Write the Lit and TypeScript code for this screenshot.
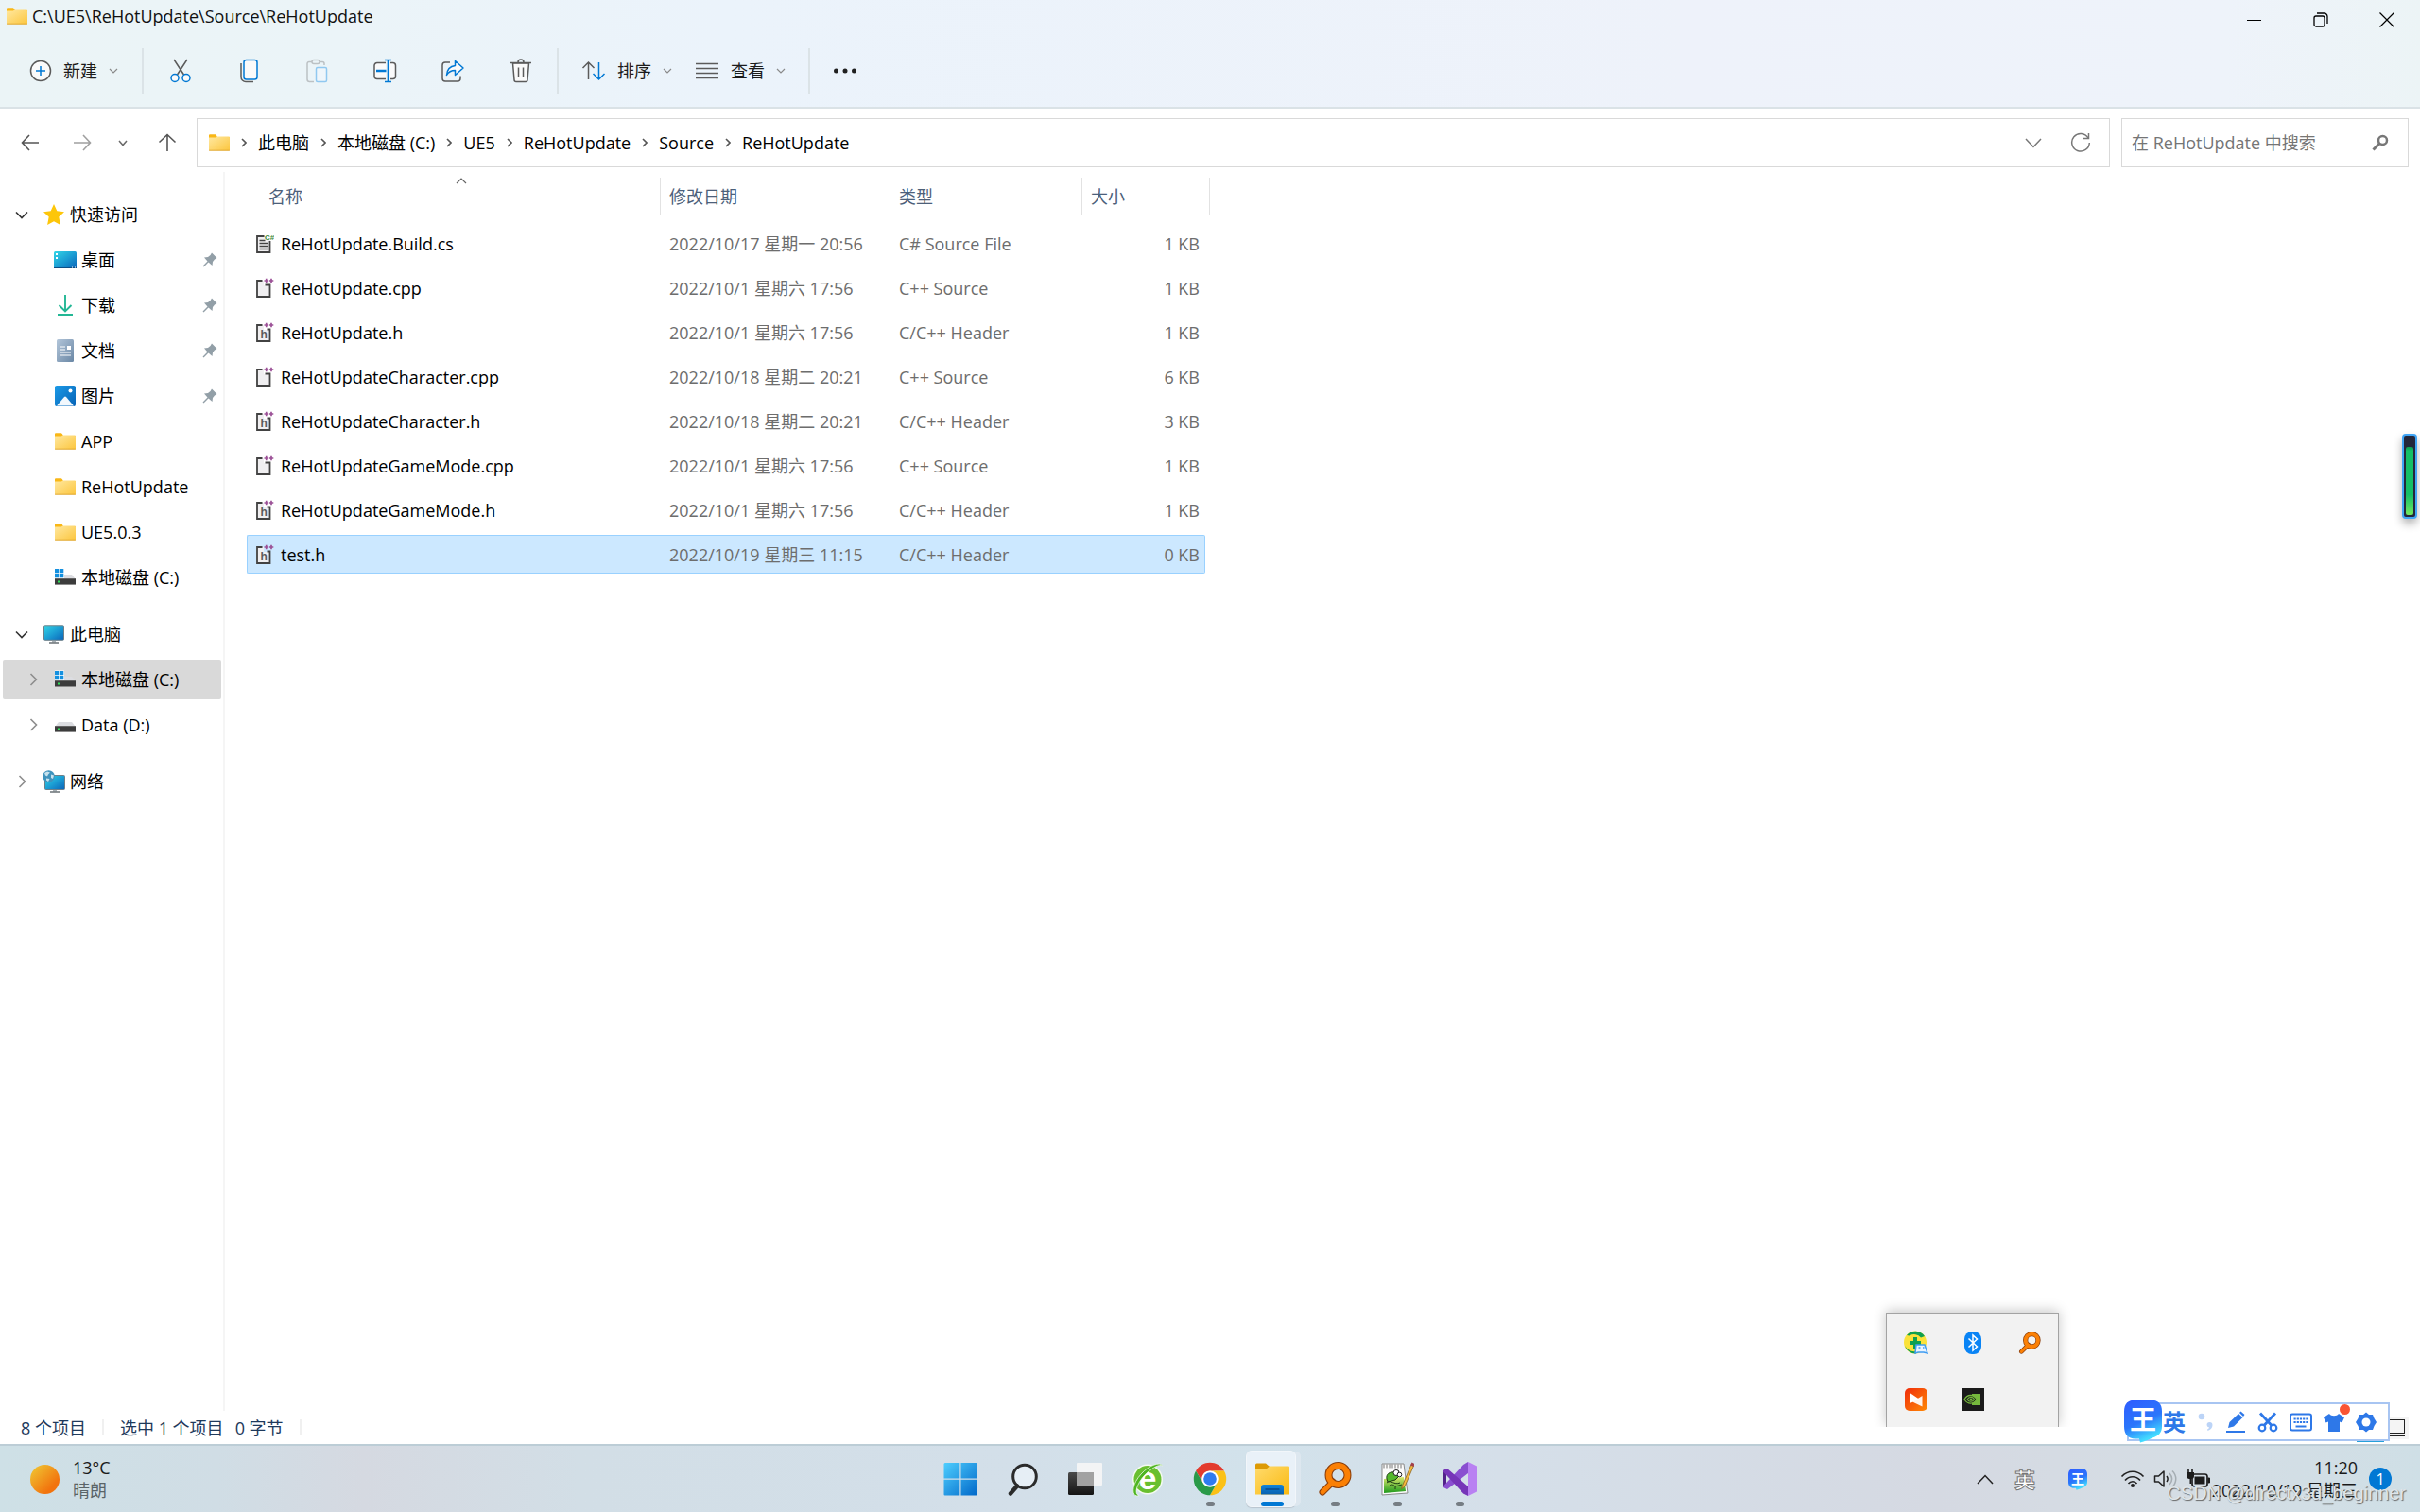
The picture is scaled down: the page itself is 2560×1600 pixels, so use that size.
import { LitElement, html, css, svg, nothing } from "lit";
import { customElement, property } from "lit/decorators.js";
import { classMap } from "lit/directives/class-map.js";

const icon = (w: number, h: number, body: unknown, vb = `0 0 ${w} ${h}`) =>
  html`<svg width=${w} height=${h} viewBox=${vb} fill="none" aria-hidden="true">${body}</svg>`;

/* ---------- toolbar ---------- */
const GREY = "#5b5b5b";
const BLUE = "#0078d4";

const newIcon = icon(24, 24, svg`
  <circle cx="12" cy="12" r="10.5" fill="#fafafa" stroke=${GREY} stroke-width="1.5"/>
  <path d="M12 7v10M7 12h10" stroke=${BLUE} stroke-width="1.5"/>`);
const cutIcon = icon(26, 26, svg`
  <path d="M6 1l10.500 16M20 1L9.500 17" stroke=${GREY} stroke-width="1.500"/>
  <circle cx="7" cy="20.500" r="4" fill="#fafafa" stroke=${BLUE} stroke-width="1.500"/>
  <circle cx="19" cy="20.500" r="4" fill="#fafafa" stroke=${BLUE} stroke-width="1.500"/>`);
const copyIcon = icon(26, 26, svg`
  <path d="M5 5v14.500a5 5 0 0 0 5 5h8" stroke=${GREY} stroke-width="1.500"/>
  <rect x="8" y="1.500" width="14" height="20.500" rx="2.500" fill="#fafafa" stroke=${BLUE} stroke-width="1.500"/>`);
const pasteIcon = icon(26, 26, svg`
  <path d="M8 3.500H5a2 2 0 0 0-2 2V22a2.500 2.500 0 0 0 2.500 2.500H10M16 3.500h3a2 2 0 0 1 2 2V7" stroke="#bcc1c4" stroke-width="1.500"/>
  <rect x="8" y="1.500" width="8" height="4" rx="2" stroke="#bcc1c4" stroke-width="1.500"/>
  <rect x="12.500" y="9.500" width="11" height="15" rx="1.500" fill="#eff6fb" stroke="#90c8f0" stroke-width="1.500"/>`);
const renameIcon = icon(26, 26, svg`
  <path d="M14 4.500H5a3 3 0 0 0-3 3v11a3 3 0 0 0 3 3h9zM19 4.500h2.500a3 3 0 0 1 3 3v11a3 3 0 0 1-3 3H19z" fill="#fafafa"/>
  <path d="M14 4.500H5a3 3 0 0 0-3 3v11a3 3 0 0 0 3 3h9M19 4.500h2.500a3 3 0 0 1 3 3v11a3 3 0 0 1-3 3H19" stroke=${GREY} stroke-width="1.500"/>
  <path d="M13 1.500h7M13 24.500h7M16.500 1.500v23" stroke=${BLUE} stroke-width="1.700"/>
  <path d="M4 13h10.500" stroke=${BLUE} stroke-width="2.500"/>`);
const shareIcon = icon(26, 26, svg`
  <path d="M10 4H5a3 3 0 0 0-3 3v14a3 3 0 0 0 3 3h13a3 3 0 0 0 3-3v-2.500" stroke=${GREY} stroke-width="1.500"/>
  <path d="M6.500 17.500C7 11 11 8 15.500 7.500V2.500l8.500 7.500-8.500 7.500v-5c-4 0-7 1.500-9 5z" fill="#fafafa" stroke=${BLUE} stroke-width="1.500" stroke-linejoin="round"/>`);
const trashIcon = icon(26, 26, svg`
  <path d="M4.500 5l1.500 17.500a2 2 0 0 0 2 2h10a2 2 0 0 0 2-2L21.500 5z" fill="#fafafa" stroke=${GREY} stroke-width="1.500"/>
  <path d="M2 4.500h22M10 4a3 3 0 0 1 6 0M10.500 9.500v9.500M15.500 9.500v9.500" stroke=${GREY} stroke-width="1.500"/>`);
const sortIcon = icon(26, 22, svg`
  <path d="M7.500 20V2M1.500 8l6-6 6 6" stroke=${GREY} stroke-width="1.500"/>
  <path d="M18.500 2v18M12.500 14l6 6 6-6" stroke=${BLUE} stroke-width="1.500"/>`);
const viewIcon = icon(26, 18, svg`<path d="M1 1.500h24M1 6.500h24M1 11.500h24M1 16.500h24" stroke=${GREY} stroke-width="1.500"/>`);
const dotsIcon = icon(26, 6, svg`<g fill="#202020"><circle cx="3.500" cy="3" r="2.500"/><circle cx="13" cy="3" r="2.500"/><circle cx="22.500" cy="3" r="2.500"/></g>`);
const smallChevron = icon(10, 6, svg`<path d="M1 1l4 4 4-4" stroke="#8a8a8a" stroke-width="1.200"/>`);

/* ---------- window controls and navigation ---------- */
const minIcon = icon(16, 16, svg`<path d="M0 8.500h15" stroke="#000"/>`);
const restoreIcon = icon(16, 16, svg`
  <rect x="1" y="4" width="11" height="11" rx="2" stroke="#000" stroke-width="1.300"/>
  <path d="M4 1h7.500a3.500 3.500 0 0 1 3.500 3.500V12" stroke="#000" stroke-width="1.300"/>`);
const closeIcon = icon(16, 16, svg`<path d="M.500.500l15 15M15.500.500l-15 15" stroke="#000" stroke-width="1.200"/>`);
const backIcon = icon(20, 18, svg`<path d="M19 9H2M9 1L1.500 9 9 17" stroke="#555" stroke-width="1.600"/>`);
const fwdIcon = icon(20, 18, svg`<path d="M1 9h17M11 1l7.500 8-7.500 8" stroke="#a0a0a0" stroke-width="1.600"/>`);
const recentIcon = icon(10, 7, svg`<path d="M1 1l4 4.500L9 1" stroke="#6a6a6a" stroke-width="1.500"/>`);
const upIcon = icon(20, 20, svg`<path d="M10 19V2M1.500 9.500L10 1.500l8.500 8" stroke="#555" stroke-width="1.600"/>`);
const crumbIcon = icon(6, 10, svg`<path d="M1 1l4 4-4 4" stroke="#555" stroke-width="1.600"/>`);
const bigDown = icon(18, 11, svg`<path d="M1 1l8 8.500L17 1" stroke="#777" stroke-width="1.500"/>`);
const refreshIcon = icon(22, 22, svg`
  <path d="M19 6A9.300 9.300 0 1 0 20.300 11" stroke="#777" stroke-width="1.500"/>
  <path d="M19.500 1v5.500H14" stroke="#777" stroke-width="1.500"/>`);
const findIcon = icon(18, 18, svg`
  <circle cx="11.500" cy="6.500" r="4.500" stroke="#777" stroke-width="2.500"/>
  <path d="M8 10l-6.500 6.500" stroke="#777" stroke-width="3"/>`);
const sortCaret = icon(12, 7, svg`<path d="M1 6l5-5 5 5" stroke="#666" stroke-width="1.200"/>`);

/* ---------- sidebar ---------- */
const openChevron = icon(14, 9, svg`<path d="M1 1.500l6 6 6-6" stroke="#333" stroke-width="1.600"/>`);
const closedChevron = icon(9, 14, svg`<path d="M1.500 1l6 6-6 6" stroke="#8e8e8e" stroke-width="1.600"/>`);
const pinIcon = icon(16, 16, svg`
  <path d="M10 .500L15.500 6l-2.500 1.500-2 2.500-.500 4L6.500 10.500 1.500 15.500.500 14.500l5-5L2 5.500l4-.500L8.500 3z" fill="#929fa7"/>`);
const folderIcon = icon(22, 18, svg`
  <defs><linearGradient id="fo" x1="0" y1="0" x2="1" y2="1"><stop stop-color="#ffe8a0"/><stop offset="1" stop-color="#fcc63e"/></linearGradient></defs>
  <path d="M0 1.500A1 1 0 0 1 1 .500h6L9 3H22v5H0z" fill="#f5b31c"/>
  <rect y="2.500" width="22" height="15" rx="1" fill="url(#fo)"/>
  <path d="M0 2.500V1.500A1 1 0 0 1 1 .500h6L8.500 2 7 3.500H0z" fill="#f9b716"/>
  <path d="M0 17.200h22" stroke="#d9a02a" stroke-width=".8"/>`);
const starIcon = icon(22, 22, svg`
  <path d="M11 0l3.300 7.300 7.700.9-5.700 5.300 1.600 8.500L11 18.200 4.100 22l1.600-8.500L0 8.200l7.700-.9z" fill="#fdc60a"/>`);
const blueGrad = (id: string) => svg`<defs><linearGradient id=${id} x1="0" y1="0" x2="1" y2="1"><stop stop-color="#33d6e6"/><stop offset=".5" stop-color="#1c9fd4"/><stop offset="1" stop-color="#0a63b8"/></linearGradient></defs>`;
const desktopIcon = icon(24, 18, svg`${blueGrad("dk")}
  <rect width="24" height="18" rx="1.500" fill="url(#dk)"/>
  <path d="M2 2h2v2H2zM2 6h2v2H2z" fill="#fff"/><path d="M0 17.500h24" stroke="#0c4f86"/><path d="M19 17h1M22 17h1" stroke="#fff"/>`);
const downloadIcon = icon(22, 24, svg`
  <path d="M11 1v17M4.500 12l6.500 6.500 6.500-6.500M3 22h16" stroke="#23b795" stroke-width="1.900"/>`);
const docIcon = icon(22, 24, svg`
  <defs><linearGradient id="dc" x1="0" y1="0" x2="1" y2="1"><stop stop-color="#b3c6da"/><stop offset="1" stop-color="#6a87a5"/></linearGradient></defs>
  <rect x="2" width="18" height="24" rx="1.500" fill="url(#dc)"/>
  <path d="M5 8h6M5 11h6M5 14h12M5 17h12" stroke="#fff"/><path d="M13 7h4v4h-4z" fill="#fff"/>`);
const pictureIcon = icon(22, 22, svg`
  <defs><linearGradient id="pc" x1="0" y1="0" x2="1" y2="1"><stop stop-color="#1c9be8"/><stop offset="1" stop-color="#0662b5"/></linearGradient></defs>
  <rect width="22" height="22" rx="2" fill="url(#pc)"/>
  <path d="M2 21.500l8-9.500a1.500 1.500 0 0 1 2 0l8 9.500z" fill="#f2f8fd"/><circle cx="16.500" cy="5.500" r="2" fill="#fff"/>`);
const driveBody = svg`
  <path d="M4 8h14l4 5H0z" fill="#dcdde1"/>
  <rect y="12" width="22" height="7" fill="#8c8c8c"/><rect y="12.500" width="22" height="5.500" fill="#3c3c3c"/>
  <rect x="3" y="14.500" width="2" height="2" fill="#2fe05a"/>`;
const driveIcon = icon(22, 22, driveBody);
const sysDriveIcon = icon(22, 22, svg`${driveBody}
  <rect width="10" height="10.500" y="1.500" fill="#fff"/>
  <path d="M0 2h4.300v4.300H0zM5 2h4.300v4.300H5zM0 7h4.300v4.300H0zM5 7h4.300v4.300H5z" fill="#1490df"/>`);
const pcIcon = icon(22, 20, svg`${blueGrad("pcg")}
  <rect x=".5" y=".8" width="21" height="15.500" rx="1" fill="url(#pcg)" stroke="#6e7f88"/>
  <path d="M9 17h4v1.500H9z" fill="#a9b1b6"/><path d="M6 19h10" stroke="#5d666b" stroke-width="1.400"/>`);
const netIcon = icon(24, 24, svg`${blueGrad("ng")}
  <rect x="2.500" y="5.500" width="21" height="15" rx="1" fill="url(#ng)" stroke="#6e7f88"/>
  <path d="M11 21h4v1.500h-4z" fill="#a9b1b6"/><path d="M8 23h10" stroke="#5d666b" stroke-width="1.400"/>
  <circle cx="6.500" cy="6.500" r="6.300" fill="#3f93bd"/><path d="M2 3l3-1.500 3 1-2 2-1 2-2-1zM9 4.500l3 1-1 3.500-2-1zM4 8.500l3.500.500L6 12 4 10.500z" fill="#c6e2ee"/>`);

/* ---------- file types ---------- */
const csIcon = icon(20, 22, svg`
  <path d="M1 3h10v4h5v13H1z" fill="#f0eff1"/>
  <path d="M9.500 3H2v17h13.500V8" stroke="#424242" stroke-width="1.800"/>
  <path d="M4.500 7.500h6M4.500 10.500h8.500M4.500 13.500h8.500M4.500 16.500h8.500" stroke="#424242" stroke-width="1.600"/>
  <text x="10" y="7" font-size="8" font-weight="700" font-family="Liberation Sans, sans-serif" fill="#388a34">C#</text>`);
const plus = svg`<path d="M9.500 3h4.500M11.700.800v4.500M14.800 3h4.500M17 .800v4.500" stroke="#9b4f96" stroke-width="1.700"/>`;
const cppIcon = icon(20, 22, svg`
  <path d="M1 3h8v5h6.500v12H1z" fill="#f0eff1"/>
  <path d="M7.500 3H2v17h13.500V7.500h-5" stroke="#424242" stroke-width="1.800"/>${plus}`);
const hIcon = icon(20, 22, svg`
  <path d="M1 3h8v5h6.500v12H1z" fill="#f0eff1"/>
  <path d="M7.500 3H2v17h13.500V7.500h-3" stroke="#424242" stroke-width="1.800"/>
  <text x="5.500" y="17" font-size="12" font-weight="700" font-family="Liberation Sans, sans-serif" fill="#5b5b5b">h</text>${plus}`);

/* ---------- taskbar ---------- */
const startIcon = icon(36, 36, svg`
  <defs><linearGradient id="st" gradientUnits="userSpaceOnUse" x1="0" y1="0" x2="36" y2="36"><stop stop-color="#4fd0ff"/><stop offset="1" stop-color="#0067c9"/></linearGradient></defs>
  <path d="M1.500 1H17.300v16.500H.500V2zM18.500 1h16a1 1 0 0 1 1 1v15.500h-17zM.500 18.700h16.800V35.500H1.500a1 1 0 0 1-1-1zM18.500 18.700h17v15.800a1 1 0 0 1-1 1h-16z" fill="url(#st)"/>`);
const searchIcon = icon(36, 36, svg`
  <circle cx="20" cy="15.500" r="12.300" fill="#e6eef5" stroke="#2b2b2b" stroke-width="3"/>
  <path d="M12 25.500l-7 8" stroke="#2b2b2b" stroke-width="4.500" stroke-linecap="round"/>`);
const taskViewIcon = icon(38, 36, svg`
  <defs><linearGradient id="tv" x1="0" y1="0" x2="0" y2="1"><stop stop-color="#4a4a4a"/><stop offset="1" stop-color="#141414"/></linearGradient></defs>
  <rect x="1" y="11" width="27" height="24" rx="1.500" fill="url(#tv)"/>
  <rect x="10" y="1" width="27" height="24" rx="1" fill="#f6f6f6" opacity=".9"/>
  <path d="M10 11h18v14H10z" fill="#a2a2a2"/>`);
const ieIcon = icon(36, 38, svg`
  <circle cx="18" cy="19.500" r="16" fill="#f4faf0"/>
  <circle cx="18" cy="19.500" r="14.500" fill="#69bf2f"/>
  <text x="18" y="29.500" text-anchor="middle" font-size="34" font-weight="700" font-family="Liberation Sans, sans-serif" fill="#fff">e</text>
  <path d="M33.500 5C32 1 21 3 11 14 2 24 1 34 5 36.500c2 1 4 0 4 0C3 35 7 24 14 16 22 7 31 3 33.500 5z" fill="#4fb521" stroke="#eef8ea" stroke-width=".8"/>`);
const chromeIcon = icon(36, 36, svg`
  <path d="M4.950 13A22 22 0 0 1 43.050 13H24A11 11 0 0 0 14.500 29.500z" fill="#e33b2e"/>
  <path d="M43.050 13A22 22 0 0 1 24 46L33.500 29.500A11 11 0 0 0 24 13z" fill="#fbc116"/>
  <path d="M24 46A22 22 0 0 1 4.950 13L14.500 29.500A11 11 0 0 0 33.500 29.500z" fill="#2a9a48"/>
  <circle cx="24" cy="24" r="11" fill="#fff"/><circle cx="24" cy="24" r="8.700" fill="#2f7bf0"/>`, "1 1 46 46");
const explorerIcon = icon(38, 36, svg`
  <defs>
    <linearGradient id="ex" x1="0" y1="0" x2="1" y2="1"><stop stop-color="#ffdb6e"/><stop offset="1" stop-color="#fab90f"/></linearGradient>
    <linearGradient id="eb" x1="0" y1="0" x2="0" y2="1"><stop stop-color="#1185da"/><stop offset="1" stop-color="#0861b0"/></linearGradient>
  </defs>
  <path d="M1 3a1.500 1.500 0 0 1 1.500-1.500h9.500L16 5H1z" fill="#dd9a05"/><path d="M1 3.500h12L16 5v4H1z" fill="#dd9a05"/>
  <path d="M1 8h11l4-3.500h20a1 1 0 0 1 1 1V34.500H1z" fill="url(#ex)"/>
  <path d="M7 34.500V27a3 3 0 0 1 3-3h18a3 3 0 0 1 3 3v7.500z" fill="url(#eb)"/>
  <path d="M11.500 29h15" stroke="#084c8d" stroke-width="1.600"/>`);
const key = (s: number) => icon(s, s, svg`
  <path d="M16 21L5 32" stroke="#8c3f0c" stroke-width="7" stroke-linecap="round"/>
  <circle cx="21.500" cy="14" r="10" stroke="#8c3f0c" stroke-width="8"/>
  <circle cx="21.500" cy="14" r="10" stroke="#fb8005" stroke-width="5.800"/>
  <path d="M15.500 21.500L5 32" stroke="#fb8005" stroke-width="4.800" stroke-linecap="round"/>`, "0 0 36 36");
const notepadIcon = icon(36, 38, svg`
  <defs><linearGradient id="np" x1="0" y1="0" x2="0" y2="1"><stop stop-color="#d7e86b"/><stop offset="1" stop-color="#1f9a1d"/></linearGradient></defs>
  <path d="M2 3h23l4 31-27 2z" fill="#fbfbfb" stroke="#8b8b8b"/>
  <path d="M4 19l21-2 2 15-23 2z" fill="url(#np)"/>
  <path d="M4 3.500v4M7 3.500v4M10 3.500v4M13 3.500v4M16 3.500v4M19 3.500v4M22 3.500v4" stroke="#777"/>
  <path d="M7 19c-1-5 3-8 9-7l3-2 1 6-4 4-8 2z" fill="#54b82c" stroke="#1f3d16"/>
  <circle cx="17" cy="12.500" r="3" fill="#fff" stroke="#222"/><circle cx="20.500" cy="14.500" r="2.300" fill="#fff" stroke="#222"/>
  <path d="M7 23c4-4 8 3 14 0M10 26c2-2 5 0 5 0M16 30v-3l7-2" stroke="#1f3d16"/>
  <path d="M33 3.500L24 25l-1.500 4.500L26 27 35.500 5z" fill="#f5b83d" stroke="#8c6420" stroke-width=".8"/>
  <path d="M32 4.500l1.500-3 3 1.500-1 3z" fill="#a2404b"/>`);
const vsIcon = icon(36, 36, svg`
  <path d="M0 9.500l4-2v20l-4-1.500z" fill="#52218a"/>
  <path d="M27 0v12L5 29l-5-2.500L22 3z" fill="#8a4fd0"/>
  <path d="M0 9.500l5-2.500 22 19v10l-5-2.500z" fill="#7635b8"/>
  <path d="M27 0l9 4.500v27L27 36z" fill="#b981f2"/>`);

/* ---------- tray ---------- */
const trayUp = icon(18, 11, svg`<path d="M1 10l8-8.500 8 8.500" stroke="#222" stroke-width="1.500"/>`);
const wangLogo = (w: number, h: number) => icon(w, h, svg`
  <defs><linearGradient id="wg" x1="0" y1="0" x2=".4" y2="1"><stop stop-color="#2f5cff"/><stop offset=".6" stop-color="#2a76fb"/><stop offset="1" stop-color="#43dcff"/></linearGradient></defs>
  <path d="M12 0h16C36 0 40 4 40 12v16c0 7-4 10-10 12-4 2-9 4-13 5l-1-4h-4C4 41 0 36 0 28V12C0 4 4 0 12 0z" fill="url(#wg)"/>
  <text x="20" y="31" text-anchor="middle" font-size="28" font-weight="700" font-family="'Noto Sans CJK SC', sans-serif" fill="#fff">王</text>`, "0 0 40 45");
const wifiIcon = icon(26, 20, svg`
  <path d="M1.500 7.500c6.500-7 16.500-7 23 0M5 11.500c4.500-5 11.500-5 16 0M8.500 15c2.500-3 6.500-3 9 0" stroke="#222" stroke-width="1.700"/>
  <circle cx="13" cy="17" r="2" fill="#222"/>`);
const volIcon = icon(26, 20, svg`
  <path d="M1.500 7v6h4l5.500 5V2L5.500 7z" stroke="#222" stroke-width="1.500" stroke-linejoin="round"/>
  <path d="M14 7c1.500 2 1.500 4 0 6" stroke="#222" stroke-width="1.500"/>
  <path d="M17 4c3.500 4 3.500 8 0 12M20 1.500c5 5 5 12 0 17" stroke="#a5adb2" stroke-width="1.500"/>`);
const batIcon = icon(26, 22, svg`
  <rect x="6" y="6" width="16" height="13" rx="2.500" stroke="#1c1c1c" stroke-width="1.700"/>
  <rect x="8.500" y="8.500" width="11" height="8" fill="#1c1c1c"/><path d="M23 10h1.500v5H23z" fill="#1c1c1c" stroke="#1c1c1c"/>
  <path d="M0 4h8v4a3 3 0 0 1-3 3v5H3.500v-5A3 3 0 0 1 0 8z" fill="#1c1c1c"/><path d="M2 1v4M6 1v4" stroke="#1c1c1c" stroke-width="1.600"/>`);

const guardIcon = icon(26, 26, svg`
  <circle cx="12" cy="12.500" r="12" fill="#fbe23a"/>
  <path d="M3 5A12 12 0 0 1 22 6L18 7.500A9 9 0 0 0 6 5.500zM1 16a12 12 0 0 0 12 8.500V22A12 12 0 0 1 1 16z" fill="#0fa050"/>
  <path d="M10 7h4v4h4v4h-4v4h-4v-4H6v-4h4z" fill="#0fa050"/>
  <path d="M13 15h9l3 9-4-1h-6l-3 1z" fill="#eaf4ff" stroke="#3f9cf2" stroke-width="1.500"/><path d="M15.500 18h2M20 18h1.500" stroke="#3f9cf2" stroke-width="1.500"/>`);
const btIcon = icon(20, 26, svg`
  <rect x="1" y="1" width="18" height="24" rx="8" fill="#0a84f5"/>
  <path d="M5.500 8.500l9 8.500-4.500 4V5l4.500 4-9 8.500" stroke="#fff" stroke-width="1.500"/>`);
const redIcon = icon(24, 26, svg`
  <defs><linearGradient id="rd" x1="0" y1="0" x2="1" y2="1"><stop stop-color="#f02c0a"/><stop offset="1" stop-color="#ff8a05"/></linearGradient></defs>
  <rect y="1" width="24" height="24" rx="5" fill="url(#rd)"/>
  <path d="M5.500 6L15 12.500 5.500 17z" fill="#fff"/><path d="M18.500 9v11.500L8 15.500z" fill="#fff" opacity=".92"/>`);
const nvIcon = icon(24, 24, svg`
  <rect width="24" height="24" fill="#1b1b1b"/><path d="M11 6h9v12h-9z" fill="#76b93d"/>
  <path d="M3 12c3-6 10-6 13 0-3 5-9 6-13 0z" fill="#1b1b1b" stroke="#76b93d" stroke-width="1.300"/>
  <path d="M6 12c2-3.500 6-3.500 7.500 0-2 3-5.500 3-7.500 0z" stroke="#76b93d" stroke-width="1.200"/><circle cx="10" cy="12" r="1.500" fill="#76b93d"/>`);

/* ---------- input-method bar ---------- */
const IME = "#2e78e8";
const penIcon = icon(22, 24, svg`<path d="M3 18l1.500-6L14 3l4.500 4-9.500 9.500z" fill=${IME}/><path d="M15 2l1.500-1.500 4 3.500L19 6z" fill=${IME}/><path d="M1 22h20" stroke=${IME} stroke-width="2"/>`);
const snipIcon = icon(22, 22, svg`<path d="M3 1.500l12 13M19 1.500L7 14.500" stroke=${IME} stroke-width="2.800"/><circle cx="5" cy="17" r="3.300" stroke=${IME} stroke-width="2.200"/><circle cx="17" cy="17" r="3.300" stroke=${IME} stroke-width="2.200"/>`);
const kbIcon = icon(24, 20, svg`<rect x="1" y="1.500" width="22" height="17" rx="2" stroke=${IME} stroke-width="2"/><path d="M4.500 6.500h15M4.500 10h15" stroke=${IME} stroke-width="2" stroke-dasharray="2.200 1"/><path d="M6.500 14.500h11" stroke=${IME} stroke-width="2"/>`);
const shirtIcon = icon(22, 22, svg`<path d="M6 2c2 3 8 3 10 0l6 4-2.500 5.500L17 10.500V21H5V10.500l-2.500 1L0 6z" fill=${IME}/>`);
const gearIcon = icon(22, 22, svg`<path d="M8 3l3-2.500L14 3l4 0 1.500 4L22 11l-2.500 4L18 19h-4l-3 2.500L8 19H4L2.500 15 0 11l2.500-4L4 3z" fill=${IME}/><circle cx="11" cy="11" r="4.500" fill="#fff"/>`);
const commaIcon = icon(18, 22, svg`<circle cx="5" cy="5" r="3.300" fill="#bcd4f7"/><path d="M10.500 14a3 3 0 1 1 6 0c0 3-2 5-5 6l-.500-1.500c1.500-.500 2-1.500 2-2a3 3 0 0 1-2.500-2.500z" fill="#bcd4f7"/>`);
const largeViewIcon = icon(22, 22, svg`<rect x="2.500" y="2.500" width="17" height="14" stroke="#222"/><path d="M2 19.500h18" stroke="#222"/>`);

type Place = { label: string; icon: unknown; level: 0 | 1; open?: boolean; branch?: boolean; pinned?: boolean; current?: boolean };
const places: Place[][] = [
  [
    { label: "快速访问", icon: starIcon, level: 0, branch: true, open: true },
    { label: "桌面", icon: desktopIcon, level: 1, pinned: true },
    { label: "下载", icon: downloadIcon, level: 1, pinned: true },
    { label: "文档", icon: docIcon, level: 1, pinned: true },
    { label: "图片", icon: pictureIcon, level: 1, pinned: true },
    { label: "APP", icon: folderIcon, level: 1 },
    { label: "ReHotUpdate", icon: folderIcon, level: 1 },
    { label: "UE5.0.3", icon: folderIcon, level: 1 },
    { label: "本地磁盘 (C:)", icon: sysDriveIcon, level: 1 },
  ],
  [
    { label: "此电脑", icon: pcIcon, level: 0, branch: true, open: true },
    { label: "本地磁盘 (C:)", icon: sysDriveIcon, level: 1, branch: true, current: true },
    { label: "Data (D:)", icon: driveIcon, level: 1, branch: true },
  ],
  [{ label: "网络", icon: netIcon, level: 0, branch: true }],
];

const files = [
  ["cs", "ReHotUpdate.Build.cs", "2022/10/17 星期一 20:56", "C# Source File", "1 KB"],
  ["cpp", "ReHotUpdate.cpp", "2022/10/1 星期六 17:56", "C++ Source", "1 KB"],
  ["h", "ReHotUpdate.h", "2022/10/1 星期六 17:56", "C/C++ Header", "1 KB"],
  ["cpp", "ReHotUpdateCharacter.cpp", "2022/10/18 星期二 20:21", "C++ Source", "6 KB"],
  ["h", "ReHotUpdateCharacter.h", "2022/10/18 星期二 20:21", "C/C++ Header", "3 KB"],
  ["cpp", "ReHotUpdateGameMode.cpp", "2022/10/1 星期六 17:56", "C++ Source", "1 KB"],
  ["h", "ReHotUpdateGameMode.h", "2022/10/1 星期六 17:56", "C/C++ Header", "1 KB"],
  ["h", "test.h", "2022/10/19 星期三 11:15", "C/C++ Header", "0 KB"],
];
const fileIcons: Record<string, unknown> = { cs: csIcon, cpp: cppIcon, h: hIcon };

const base = css`
  * { box-sizing: border-box; }
  svg { display: block; flex: none; }
  button {
    font: inherit; color: inherit; background: none; border: 0; padding: 0; margin: 0;
    display: flex; align-items: center; justify-content: center; cursor: default;
  }
  a { color: inherit; text-decoration: none; cursor: default; }
`;

@customElement("command-bar")
class CommandBar extends LitElement {
  static styles = [base, css`
    :host { display: block; background: linear-gradient(90deg, #ebf4f6 0, #ebf4f8 14%, #ebf3fb 30%, #eef2fa 70%, #eef3fa 92%, #ecf4f6 100%); border-bottom: 2px solid #dae2e6; }
    .title { display: flex; align-items: flex-start; height: 42px; }
    .caption { display: flex; align-items: center; gap: 5px; height: 34px; padding-left: 7px; color: #111; }
    .controls { display: flex; margin-left: auto; }
    .controls button { width: 70px; height: 42px; }
    .tools { display: flex; align-items: center; height: 71px; padding: 0 0 6px 19px; }
    .labelled { gap: 12px; height: 48px; padding: 0 12px; color: #1b1b1b; }
    .labelled svg:last-child { margin-left: 0; }
    .glyph { width: 72px; height: 48px; }
    .rule { width: 2px; height: 48px; background: #dbe3e7; }
    .first { margin: 0 3px 0 13px; }
    .second { margin: 0 12px 0 2px; }
    .third { margin: 0 12px; }
    .more { width: 50px; height: 48px; }
  `];
  render() {
    return html`
      <div class="title">
        <div class="caption">${folderIcon}<span>C:\\UE5\\ReHotUpdate\\Source\\ReHotUpdate</span></div>
        <div class="controls">
          <button aria-label="最小化">${minIcon}</button>
          <button aria-label="还原">${restoreIcon}</button>
          <button aria-label="关闭">${closeIcon}</button>
        </div>
      </div>
      <div class="tools">
        <button class="labelled">${newIcon}<span>新建</span>${smallChevron}</button>
        <div class="rule first"></div>
        <button class="glyph" aria-label="剪切">${cutIcon}</button>
        <button class="glyph" aria-label="复制">${copyIcon}</button>
        <button class="glyph" aria-label="粘贴" disabled>${pasteIcon}</button>
        <button class="glyph" aria-label="重命名">${renameIcon}</button>
        <button class="glyph" aria-label="共享">${shareIcon}</button>
        <button class="glyph" aria-label="删除">${trashIcon}</button>
        <div class="rule second"></div>
        <button class="labelled">${sortIcon}<span>排序</span>${smallChevron}</button>
        <button class="labelled">${viewIcon}<span>查看</span>${smallChevron}</button>
        <div class="rule third"></div>
        <button class="more" aria-label="查看更多">${dotsIcon}</button>
      </div>`;
  }
}

@customElement("address-row")
class AddressRow extends LitElement {
  @property({ attribute: false }) crumbs = ["此电脑", "本地磁盘 (C:)", "UE5", "ReHotUpdate", "Source", "ReHotUpdate"];
  static styles = [base, css`
    :host { display: flex; align-items: center; gap: 12px; padding: 10px 12px 5px 22px; }
    .nav { display: flex; align-items: center; width: 174px; }
    .nav button { height: 40px; }
    .back { width: 20px; }
    .fwd { width: 20px; margin-left: 35px; }
    .recent { width: 10px; margin-left: 28px; }
    .up { width: 20px; margin-left: 32px; }
    .address, .search { display: flex; align-items: center; height: 52px; border: 1px solid #d9d9d9; }
    .address { flex: 1; padding: 0 15px 0 12px; }
    .trail { display: flex; align-items: center; list-style: none; margin: 0 0 0 12px; padding: 0; color: #000; }
    .trail li { display: flex; align-items: center; gap: 12px; }
    .trail li + li { margin-left: 12px; }
    .drop { margin-left: auto; width: 30px; height: 40px; }
    .reload { width: 30px; height: 40px; margin-left: 20px; }
    .search { width: 304px; padding: 0 20px 0 10px; }
    .search input { flex: 1; min-width: 0; border: 0; padding: 0; outline: 0; background: none; font: inherit; color: #333; }
    .search input::placeholder { color: #757575; opacity: 1; }
  `];
  render() {
    return html`
      <div class="nav">
        <button class="back" aria-label="后退">${backIcon}</button>
        <button class="fwd" aria-label="前进">${fwdIcon}</button>
        <button class="recent" aria-label="最近位置">${recentIcon}</button>
        <button class="up" aria-label="上移">${upIcon}</button>
      </div>
      <div class="address">
        ${folderIcon}
        <ol class="trail">${this.crumbs.map((c) => html`<li>${crumbIcon}<button>${c}</button></li>`)}</ol>
        <button class="drop" aria-label="以前的位置">${bigDown}</button>
        <button class="reload" aria-label="刷新">${refreshIcon}</button>
      </div>
      <form class="search" role="search">
        <input type="text" aria-label="搜索" placeholder="在 ReHotUpdate 中搜索" />
        <button type="button" aria-label="开始搜索">${findIcon}</button>
      </form>`;
  }
}

@customElement("place-tree")
class PlaceTree extends LitElement {
  static styles = [base, css`
    :host { display: block; width: 238px; flex: none; border-right: 2px solid #f5f5f5; padding-top: 21px; color: #000; }
    ul { list-style: none; margin: 0 0 12px; padding: 0; }
    li { padding: 3px 2px 3px 3px; }
    .place { display: flex; align-items: center; height: 42px; padding: 0 4px 0 12px; border-radius: 2px; }
    .nested { padding-left: 24px; }
    .current { background: #d9d9d9; }
    .twist { display: flex; justify-content: center; width: 16px; margin-right: 14px; }
    .pic { display: flex; justify-content: center; width: 24px; margin-right: 5px; }
    .pin { margin-left: auto; }
  `];
  render() {
    return html`<nav aria-label="导航窗格">${places.map((group) => html`<ul>${group.map((p) => html`
      <li><a href="#" class=${classMap({ place: true, nested: p.level === 1, current: !!p.current })}>
        <span class="twist">${p.branch ? (p.open ? openChevron : closedChevron) : nothing}</span>
        <span class="pic">${p.icon}</span><span>${p.label}</span>
        ${p.pinned ? html`<span class="pin">${pinIcon}</span>` : nothing}
      </a></li>`)}</ul>`)}</nav>`;
  }
}

@customElement("file-list")
class FileList extends LitElement {
  static styles = [base, css`
    :host { display: block; flex: 1; min-width: 0; padding-left: 23px; }
    table { table-layout: fixed; width: 1019px; border-collapse: separate; border-spacing: 0 6px; }
    .c-name { width: 438px; }
    .c-date { width: 243px; }
    .c-type { width: 203px; }
    .c-size { width: 130px; }
    .c-end { width: 5px; }
    th { height: 43px; padding: 0; font-weight: 400; color: #4c607a; vertical-align: top; position: relative; }
    th button { width: 100%; height: 40px; justify-content: flex-start; padding-left: 9px; border-right: 1px solid #e2e2e2; }
    th:first-child button { padding-left: 23px; }
    th:nth-child(4) button { border-right: 0; }
    .end { height: 40px; border-right: 1px solid #e2e2e2; }
    .caret { position: absolute; top: 0; left: 221px; }
    td { height: 41px; padding: 0 0 0 9px; color: #6d6d6d; white-space: nowrap; border: 0 solid #99d1ff; }
    td.size { text-align: right; padding-right: 6px; }
    td.size ~ td { padding: 0; }
    .file { display: flex; align-items: center; gap: 7px; color: #000; }
    .picked td { background: #cce8ff; border-width: 1px 0; }
    .picked td:first-child { border-left-width: 1px; padding-left: 8px; border-radius: 2px 0 0 2px; }
    .picked td.size { border-right-width: 1px; padding-right: 5px; border-radius: 0 2px 2px 0; }
    .picked td.size ~ td { background: none; border: 0; }
  `];
  render() {
    return html`<table>
      <colgroup><col class="c-name" /><col class="c-date" /><col class="c-type" /><col class="c-size" /><col class="c-end" /></colgroup>
      <thead><tr>
        <th><span class="caret">${sortCaret}</span><button>名称</button></th>
        <th><button>修改日期</button></th><th><button>类型</button></th><th><button>大小</button></th>
        <th><div class="end"></div></th>
      </tr></thead>
      <tbody>${files.map(([kind, name, date, type, size]) => html`
        <tr class=${classMap({ picked: name === "test.h" })}>
          <td><div class="file">${fileIcons[kind]}<span>${name}</span></div></td>
          <td>${date}</td><td>${type}</td><td class="size">${size}</td><td></td>
        </tr>`)}</tbody>
    </table>`;
  }
}

@customElement("task-bar")
class TaskBar extends LitElement {
  static styles = [base, css`
    :host {
      display: grid; grid-template-columns: 1fr auto 1fr; align-items: center; height: 72px; border-top: 2px solid #bccdd6;
      background: linear-gradient(90deg, #cee0e6 0, #d0dde5 9%, #d5d9e1 15%, #d2dee6 24%, #d3dfe9 42%, #d2e2eb 52%, #d5dfe9 62%, #d5d9e2 80%, #d5dde4 90%, #cfdfe6 100%);
    }
    .weather { justify-self: start; margin-left: 32px; gap: 14px; text-align: left; line-height: 24px; }
    .sun { width: 31px; height: 31px; border-radius: 50%; background: linear-gradient(135deg, #f0c030 10%, #f2730d 75%); }
    .temp { color: #1a1a1a; }
    .sky { color: #5a6468; }
    .apps { display: flex; height: 70px; }
    .app { position: relative; width: 66px; height: 70px; }
    .app::after { content: ""; position: absolute; bottom: 6px; left: 50%; width: 9px; height: 5px; margin-left: -4px; border-radius: 3px; background: transparent; }
    .running::after { background: #767d83; }
    .active::before { content: ""; position: absolute; left: 5px; top: 5px; width: 51px; height: 58px; border-radius: 6px; background: #e9f1f8; border: 1px solid #f2f6fa; box-shadow: 6px 0 0 -1px #dde7ef, 0 1px 1px #b9c5cf; }
    .active::after { width: 24px; margin-left: -12px; background: #0078d4; }
    .app svg { position: relative; }
    .tray { justify-self: end; display: flex; align-items: center; padding-right: 30px; }
    .up { width: 26px; height: 40px; }
    .lang { width: 24px; margin-left: 17px; font-size: 22px; line-height: 30px; font-weight: 700; color: #fff; -webkit-text-stroke: 1px #777; }
    .wang { width: 24px; margin-left: 32px; }
    .status { display: flex; gap: 9px; margin: 0 0 0 33px; }
    .clock { width: 146px; margin-left: 9px; text-align: right; line-height: 24px; color: #1a1a1a; white-space: nowrap; display: block; }
    .clock span { display: flex; justify-content: flex-end; }
    .badge { width: 24px; height: 24px; margin-left: 12px; border-radius: 50%; background: #0078d4; color: #fff; font-size: 16px; }
  `];
  render() {
    const apps: [string, unknown, string][] = [
      ["开始", startIcon, ""], ["搜索", searchIcon, ""], ["任务视图", taskViewIcon, ""], ["浏览器", ieIcon, ""],
      ["Chrome", chromeIcon, "running"], ["文件资源管理器", explorerIcon, "active"], ["Everything", key(36), "running"],
      ["Notepad++", notepadIcon, "running"], ["Visual Studio", vsIcon, "running"],
    ];
    return html`
      <button class="weather"><span class="sun"></span><span><div class="temp">13°C</div><div class="sky">晴朗</div></span></button>
      <div class="apps">${apps.map(([label, pic, state]) => html`<button class="app ${state}" aria-label=${label}>${pic}</button>`)}</div>
      <div class="tray">
        <button class="up" aria-label="显示隐藏的图标">${trayUp}</button>
        <button class="lang">英</button>
        <button class="wang" aria-label="输入法">${wangLogo(20, 25)}</button>
        <button class="status" aria-label="网络和电源">${wifiIcon}${volIcon}${batIcon}</button>
        <button class="clock"><span>11:20</span><span>2022/10/19 星期三</span></button>
        <button class="badge">1</button>
      </div>`;
  }
}

@customElement("ime-bar")
class ImeBar extends LitElement {
  static styles = [base, css`
    :host { display: flex; align-items: center; width: 278px; height: 41px; padding: 0 12px 0 36px; background: #fff; border: 2px solid #a8c5f2; }
    .logo { position: absolute; left: -5px; top: -5px; }
    .keys { display: flex; flex: 1; align-items: center; justify-content: space-between; color: #2e78e8; font-size: 24px; line-height: 30px; font-weight: 700; }
    .skin { position: relative; }
    .skin::after { content: ""; position: absolute; right: -6px; top: -8px; width: 11px; height: 11px; border-radius: 50%; background: #fa5534; }
  `];
  render() {
    return html`<button class="logo" aria-label="王码">${wangLogo(40, 46)}</button>
      <div class="keys">
        <button>英</button><button aria-label="标点">${commaIcon}</button><button aria-label="手写">${penIcon}</button>
        <button aria-label="截图">${snipIcon}</button><button aria-label="键盘">${kbIcon}</button>
        <button class="skin" aria-label="皮肤">${shirtIcon}</button><button aria-label="设置">${gearIcon}</button>
      </div>`;
  }
}

@customElement("app-root")
class AppRoot extends LitElement {
  static styles = [base, css`
    :host {
      display: flex; flex-direction: column; position: relative; min-height: 100vh; overflow: hidden; background: #fff;
      font: 18px/24px "Open Sans", "Noto Sans CJK SC", sans-serif;
    }
    main { display: flex; flex: 1; }
    .summary { display: flex; align-items: center; height: 35px; padding-left: 22px; color: #1e395b; }
    .mark { width: 2px; height: 17px; margin: 0 17px; background: #f0f0f0; }
    .second { margin-left: 12px; }
    .modes { display: flex; align-items: center; margin-left: auto; padding-right: 12px; }
    .details { width: 29px; height: 24px; margin-top: 6px; background: #cce8f7; border: 1px solid #26a0da; }
    .large { width: 26px; height: 24px; background: #f4f4f4; }
    .hidden-icons {
      position: absolute; right: 382px; bottom: 90px; width: 183px; height: 121px; padding: 11px 7px 0; background: #f2f2f2;
      border: 1px solid #a3a3a3; border-bottom: 0; box-shadow: 0 -2px 12px rgba(0, 0, 0, 0.22); clip-path: inset(-20px -20px 0 -20px);
      display: grid; grid-template-columns: repeat(3, 60px); grid-auto-rows: 60px; justify-content: center; align-items: start;
    }
    .hidden-icons button { height: 40px; }
    .ime { position: absolute; right: 32px; bottom: 75px; }
    .monitor { position: absolute; right: 3px; top: 459px; width: 16px; height: 90px; padding: 2px; border: 2px solid #3fa4f5; border-radius: 4px; background: #23263a; box-shadow: 0 5px 10px rgba(0, 0, 0, 0.3); }
    .level { height: 72px; margin-top: 10px; border-radius: 2px; background: linear-gradient(#0c9c50 0, #14bf66 6%, #14bf66 70%, #72e95f 100%); }
    .watermark { position: absolute; right: 15px; bottom: 7px; font: 20px/26px "Liberation Sans", Arial, sans-serif; color: #dfe5e9; text-shadow: 1px 1px 1px #666; pointer-events: none; }
  `];
  render() {
    return html`
      <command-bar></command-bar>
      <address-row></address-row>
      <main><place-tree></place-tree><file-list></file-list></main>
      <div class="summary">
        <span>8 个项目</span><span class="mark"></span><span>选中 1 个项目</span><span class="second">0 字节</span><span class="mark"></span>
        <div class="modes"><button class="details" aria-label="详细信息"></button><button class="large" aria-label="大图标">${largeViewIcon}</button></div>
      </div>
      <task-bar></task-bar>
      <div class="hidden-icons">
        <button aria-label="安全卫士">${guardIcon}</button><button aria-label="蓝牙">${btIcon}</button><button aria-label="Everything">${key(24)}</button>
        <button aria-label="远程控制">${redIcon}</button><button aria-label="NVIDIA">${nvIcon}</button>
      </div>
      <ime-bar class="ime"></ime-bar>
      <div class="monitor"><div class="level"></div></div>
      <div class="watermark">CSDN @directx3d_beginner</div>`;
  }
}
